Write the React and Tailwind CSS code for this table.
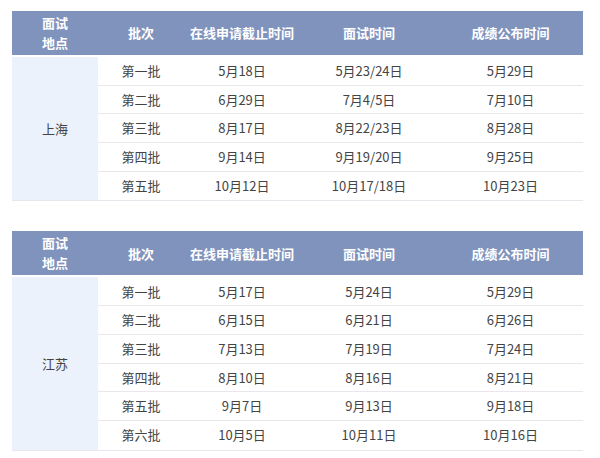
const cols = 'grid grid-cols-[86px_86px_116px_138px_145px]';

const tables = [
  {
    place: '上海',
    rows: [
      ['第一批', '5月18日', '5月23/24日', '5月29日'],
      ['第二批', '6月29日', '7月4/5日', '7月10日'],
      ['第三批', '8月17日', '8月22/23日', '8月28日'],
      ['第四批', '9月14日', '9月19/20日', '9月25日'],
      ['第五批', '10月12日', '10月17/18日', '10月23日'],
    ],
  },
  {
    place: '江苏',
    rows: [
      ['第一批', '5月17日', '5月24日', '5月29日'],
      ['第二批', '6月15日', '6月21日', '6月26日'],
      ['第三批', '7月13日', '7月19日', '7月24日'],
      ['第四批', '8月10日', '8月16日', '8月21日'],
      ['第五批', '9月7日', '9月13日', '9月18日'],
      ['第六批', '10月5日', '10月11日', '10月16日'],
    ],
  },
];

const ScheduleTable = ({ place, rows }) => (
  <div className="w-[571px]">
    <div className={`${cols} h-[44px] bg-[#7f93bd] text-white font-bold text-[13px]`}>
      <div className="flex flex-col items-center justify-center leading-[20px]">
        <span>面试</span>
        <span>地点</span>
      </div>
      <div className="flex items-center justify-center">批次</div>
      <div className="flex items-center justify-center">在线申请截止时间</div>
      <div className="flex items-center justify-center">面试时间</div>
      <div className="flex items-center justify-center">成绩公布时间</div>
    </div>
    <div className="mt-[2px] flex border-b border-[#ebe5ee]">
      <div className="w-[86px] bg-[#ebf2fb] flex items-center justify-center text-[13px] text-[#444]">
        {place}
      </div>
      <div className="flex-1">
        {rows.map((r, i) => (
          <div
            key={i}
            className={`grid grid-cols-[86px_116px_138px_145px] h-[28.7px] text-[13px] text-[#444] ${i < rows.length - 1 ? 'border-b border-[#ebe5ee]' : ''}`}
          >
            {r.map((c, j) => (
              <div key={j} className="flex items-center justify-center">{c}</div>
            ))}
          </div>
        ))}
      </div>
    </div>
  </div>
);

export default function App() {
  return (
    <div
      className="w-[600px] h-[458px] bg-white pl-[12px] pt-[11px] flex flex-col gap-[30px]"
      style={{ fontFamily: '"Noto Sans CJK SC", "Noto Sans", sans-serif' }}
    >
      {tables.map((t) => (
        <ScheduleTable key={t.place} {...t} />
      ))}
    </div>
  );
}
